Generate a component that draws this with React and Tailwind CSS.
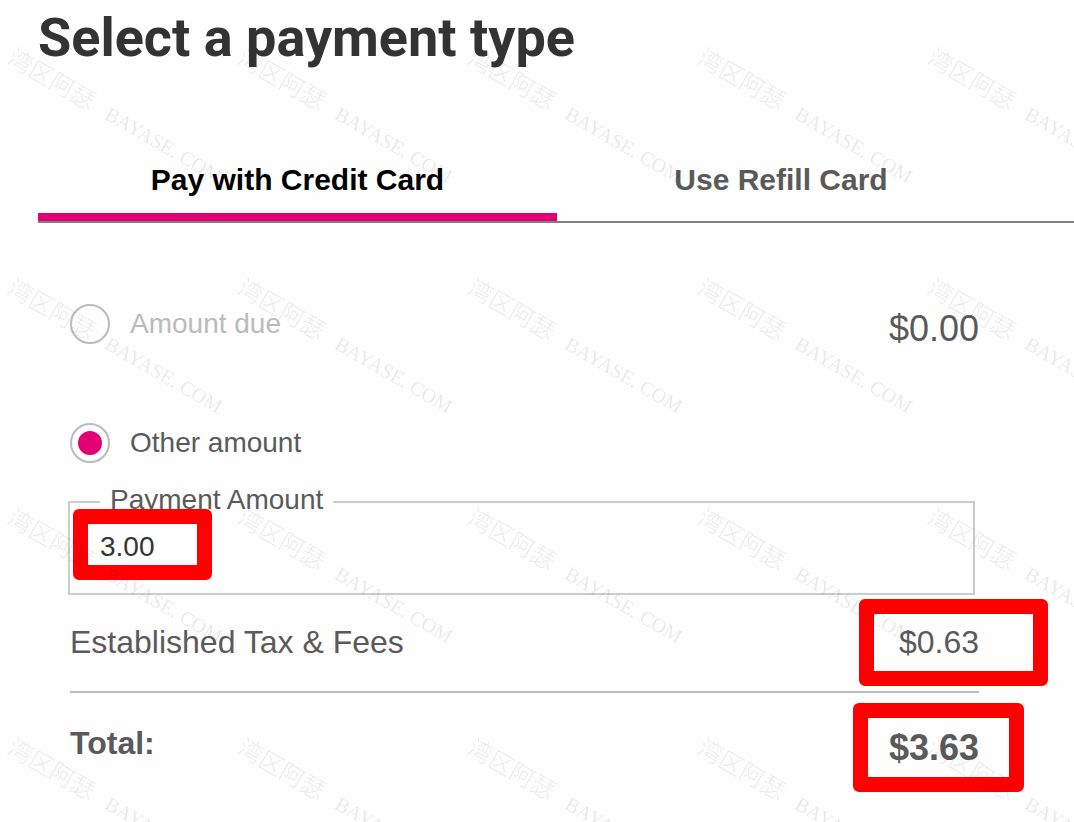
import React, { useState } from "react";

const tabs = [
  { id: "credit", label: "Pay with Credit Card" },
  { id: "refill", label: "Use Refill Card" },
];

function Watermark() {
  return (
    <div
      aria-hidden="true"
      className="pointer-events-none fixed inset-0 z-20 grid auto-rows-[230px] grid-cols-[repeat(5,230px)] overflow-hidden select-none"
    >
      {Array.from({ length: 20 }, (_, i) => (
        <div key={i} className="pt-[42px] pl-[18px]">
          <p className="flex h-8 w-max origin-top-left rotate-30 items-center gap-4 font-['Liberation_Serif','Noto_Sans_CJK_SC',serif]">
            <span className="text-2xl font-light text-black/8">湾区阿瑟</span>
            <span className="text-xl text-black/8">BAYASE. COM</span>
          </p>
        </div>
      ))}
    </div>
  );
}

function Highlight({ className }) {
  return (
    <span
      aria-hidden="true"
      className={`pointer-events-none absolute z-10 rounded-md border-[15px] border-[#ff0000] ${className}`}
    />
  );
}

function AmountOption({ value, label, checked, disabled, onChange }) {
  return (
    <label
      className={`flex items-center gap-5 text-[28px] leading-10 ${
        disabled ? "text-[#bbbbbb]" : "text-[#5a5a5a]"
      }`}
    >
      <input
        type="radio"
        name="amountType"
        value={value}
        checked={checked}
        disabled={disabled}
        onChange={onChange}
        className="size-10 appearance-none rounded-full border-2 border-[#bbbbbb] bg-clip-content p-1.5 checked:bg-[#e20074]"
      />
      {label}
    </label>
  );
}

function App() {
  const [activeTab, setActiveTab] = useState("credit");
  const [amount, setAmount] = useState("3.00");
  const [amountType, setAmountType] = useState("other");

  const handleType = (e) => setAmountType(e.target.value);

  return (
    <div className="min-h-screen bg-[#fefefe] font-['Liberation_Sans',Arial,sans-serif] text-[#5a5a5a]">
      <h1 className="pl-[38px] font-['Roboto',sans-serif] text-[54px] leading-[76px] font-bold text-[#333333]">
        Select a payment type
      </h1>

      {/* Tabs */}
      <div
        role="tablist"
        className="mt-[84px] ml-[38px] grid grid-cols-[519fr_448fr] border-b-2 border-[#808080] pr-[69px]"
      >
        {tabs.map((tab) => (
          <button
            key={tab.id}
            type="button"
            role="tab"
            aria-selected={activeTab === tab.id}
            onClick={() => setActiveTab(tab.id)}
            className={`border-b-8 pb-[13px] text-[30px] leading-10 font-bold ${
              activeTab === tab.id
                ? "border-[#e20074] text-black"
                : "border-transparent"
            }`}
          >
            {tab.label}
          </button>
        ))}
      </div>

      <form className="mt-[81px] mr-[95px] ml-[70px]">
        <div className="flex items-start justify-between">
          <AmountOption
            value="due"
            label="Amount due"
            checked={amountType === "due"}
            disabled
            onChange={handleType}
          />
          <span className="text-4xl leading-[50px]">$0.00</span>
        </div>

        <div className="mt-[69px] flex">
          <AmountOption
            value="other"
            label="Other amount"
            checked={amountType === "other"}
            onChange={handleType}
          />
        </div>

        <fieldset className="mt-[19px] mr-1 -ml-0.5 border-2 border-[#cccccc] px-[30px] pb-[26px]">
          <legend className="px-2.5 pb-1 text-[28px] leading-9">
            <label htmlFor="amount">Payment Amount</label>
          </legend>
          <div className="relative pt-[5px]">
            <input
              id="amount"
              type="text"
              inputMode="decimal"
              value={amount}
              onChange={(e) => setAmount(e.target.value)}
              className="block h-10 w-full bg-transparent text-[28px] leading-10 text-[#333333] outline-none"
            />
            <Highlight className="-top-[13px] -left-[27px] h-[71px] w-[139px]" />
          </div>
        </fieldset>

        {/* Summary */}
        <div className="mt-[27px] flex justify-between border-b-2 border-[#bbbbbb] pb-[29px] text-[32px] leading-10">
          <span>Established Tax &amp; Fees</span>
          <span className="relative">
            $0.63
            <Highlight className="-top-[23px] -right-[69px] -bottom-6 -left-10" />
          </span>
        </div>
        <div className="mt-[30px] flex items-start justify-between font-bold">
          <span className="text-[32px] leading-10">Total:</span>
          <span className="relative text-4xl leading-[50px]">
            $3.63
            <Highlight className="-top-5 -right-[45px] -bottom-[19px] -left-9" />
          </span>
        </div>
      </form>

      <Watermark />
    </div>
  );
}

export default App;
